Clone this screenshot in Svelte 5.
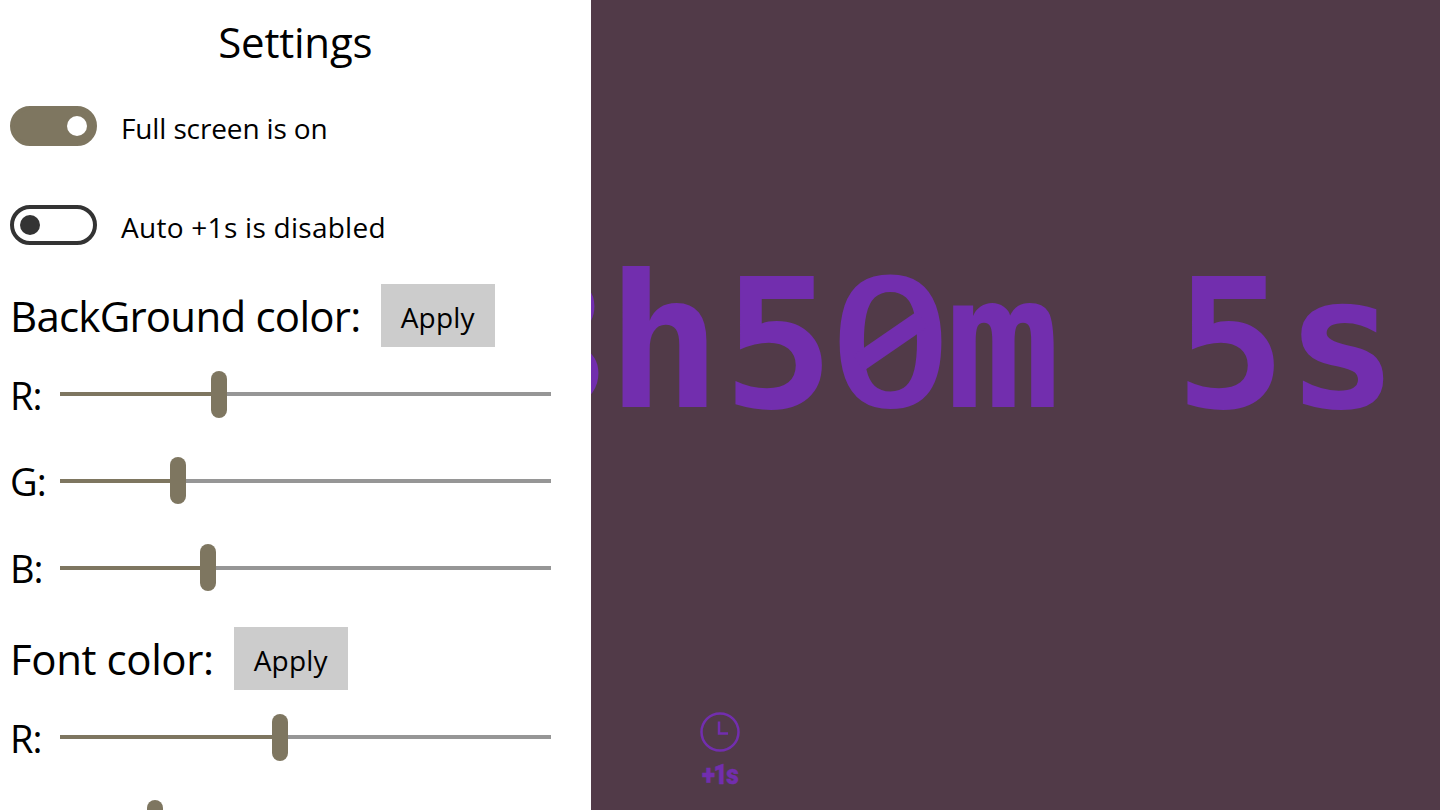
<script lang="ts">
  type Channel = { name: string; pos: number }

  const sections: { title: string; kind: string; channels: Channel[] }[] = [
    {
      title: 'BackGround color:',
      kind: 'back',
      channels: [
        { name: 'R', pos: 158.5 },
        { name: 'G', pos: 117.5 },
        { name: 'B', pos: 147.5 },
      ],
    },
    {
      title: 'Font color:',
      kind: 'font',
      channels: [
        { name: 'R', pos: 220 },
        { name: 'G', pos: 95 },
      ],
    },
  ]

  // one entry per glyph, width is the advance it is fitted to
  const glyphs = [
    { ch: '8', x: 499.5, w: 105, face: 'sans' },
    { ch: 'h', x: 606, w: 115, face: 'mono' },
    { ch: '5', x: 722, w: 112, face: 'digit' },
    { ch: '0', x: 830, w: 120, face: 'zero' },
    { ch: 'm', x: 945, w: 115.5, face: 'mono' },
    { ch: '5', x: 1174, w: 112, face: 'digit' },
    { ch: 's', x: 1285, w: 113, face: 'mono' },
  ]

  let fullScreen = $state(true)
  let auto = $state(false)
</script>

<div class="window">
  <aside class="settings">
    <h1>Settings</h1>

    <div class="option">
      <button class="toggle" class:on={fullScreen} aria-label="Full screen" onclick={() => fullScreen = !fullScreen}><i></i></button>
      <span class="full">Full screen is {fullScreen ? 'on' : 'off'}</span>
    </div>
    <div class="option">
      <button class="toggle" class:on={auto} aria-label="Auto +1s" onclick={() => auto = !auto}><i></i></button>
      <span class="auto">Auto +1s is {auto ? 'enabled' : 'disabled'}</span>
    </div>

    {#each sections as s}
      <section>
        <header class={s.kind}>
          <h2>{s.title}</h2>
          <button class="apply">Apply</button>
        </header>
        {#each s.channels as c}
          <div class="channel">
            <span>{c.name}:</span>
            <div class="track">
              <div class="fill" style="width:{c.pos}px"></div>
              <div class="thumb"></div>
            </div>
          </div>
        {/each}
      </section>
    {/each}
  </aside>

  <main>
    <svg class="time" viewBox="590.5 200 849.5 280" width="849.5" height="280">
      {#each glyphs as g}
        <text x={g.x} y="407" textLength={g.w} lengthAdjust="spacingAndGlyphs" class={g.face}>{g.ch}</text>
      {/each}
      <line x1="858" y1="363" x2="922" y2="319" class="slash" />
    </svg>
    <button class="plus">
      <svg viewBox="0 0 40 40" width="40" height="40">
        <circle cx="20" cy="20" r="18.5" />
        <path d="M19 9.5V21.5H28" />
      </svg>
      <span>+1s</span>
    </button>
  </main>
</div>

<style>
  :global(body) { overflow: hidden; }
  .window {
    display: flex;
    width: 1440px;
    height: 810px;
    overflow: hidden;
    background: #513a48;
    font-family: 'Open Sans', 'Noto Sans', sans-serif;
    color: #000;
  }
  button {
    border: 0;
    padding: 0;
    font-family: inherit;
    color: inherit;
  }
  .settings {
    width: 590.5px;
    flex: none;
    box-sizing: border-box;
    padding-left: 10px;
    background: #fff;
  }
  h1, h2 {
    margin: 0;
    font-weight: 400;
    font-size: 42px;
    white-space: nowrap;
  }
  h1 {
    height: 76.5px;
    line-height: 84px;
    margin-left: -10px;
    text-align: center;
    letter-spacing: -0.2px;
  }
  .option {
    display: flex;
    align-items: center;
    gap: 24px;
    height: 99px;
    font-size: 28px;
  }
  .option span { padding-top: 3px; }
  .full { letter-spacing: -0.13px; }
  .auto { letter-spacing: 0.27px; }
  .toggle {
    display: flex;
    align-items: center;
    width: 87px;
    height: 40px;
    box-sizing: border-box;
    padding: 0 6px;
    border: 4px solid #333;
    border-radius: 20px;
    background: #fff;
  }
  .toggle i {
    width: 20px;
    height: 20px;
    border-radius: 50%;
    background: #333;
  }
  .toggle.on {
    justify-content: flex-end;
    border-color: #7e7660;
    background: #7e7660;
  }
  .toggle.on i { background: #fff; }
  section {
    padding-top: 9.5px;
    margin-bottom: 6.5px;
  }
  header {
    display: flex;
    height: 67px;
  }
  h2 { line-height: 64px; }
  .back h2 {
    width: 370.5px;
    letter-spacing: -0.75px;
  }
  .font h2 {
    width: 223.5px;
    letter-spacing: -0.4px;
  }
  .apply {
    width: 114.5px;
    height: 63px;
    padding-top: 3px;
    background: #ccc;
    font-size: 28px;
    letter-spacing: 0.2px;
  }
  .channel {
    display: flex;
    align-items: center;
    height: 86.67px;
    font-size: 38px;
    letter-spacing: -1px;
  }
  .channel span {
    width: 50px;
    padding-top: 1px;
  }
  .track {
    display: flex;
    align-items: center;
    width: 491px;
    height: 4px;
    background: #969696;
  }
  .fill {
    height: 4px;
    background: #7e7660;
  }
  .thumb {
    flex: none;
    width: 16px;
    height: 47px;
    margin-left: -8px;
    border-radius: 8px;
    background: #7e7660;
  }
  main {
    display: flex;
    flex-direction: column;
    justify-content: space-between;
    flex: 1;
    padding-top: 200px;
  }
  .time {
    display: block;
    fill: #722eae;
    font-weight: 700;
  }
  .sans {
    font-family: 'Noto Sans', sans-serif;
    font-size: 184px;
  }
  .zero {
    font-family: 'Open Sans', sans-serif;
    font-size: 184px;
    font-weight: 600;
  }
  .digit {
    font-family: 'DejaVu Sans Mono', monospace;
    font-size: 180px;
  }
  .mono {
    font-family: 'DejaVu Sans Mono', monospace;
    font-size: 186px;
  }
  .slash {
    stroke: #722eae;
    stroke-width: 19;
  }
  .plus {
    display: flex;
    flex-direction: column;
    align-items: center;
    width: 60px;
    height: 98px;
    margin-left: 99.5px;
    background: none;
    color: #722eae;
    font: 900 27px/46px Roboto, sans-serif;
    letter-spacing: -1.5px;
  }
  .plus span {
    transform: scaleX(0.9);
    -webkit-text-stroke: 0.5px #722eae;
  }
  .plus svg {
    flex: none;
    fill: none;
    stroke: #722eae;
    stroke-width: 2.5;
  }
</style>
